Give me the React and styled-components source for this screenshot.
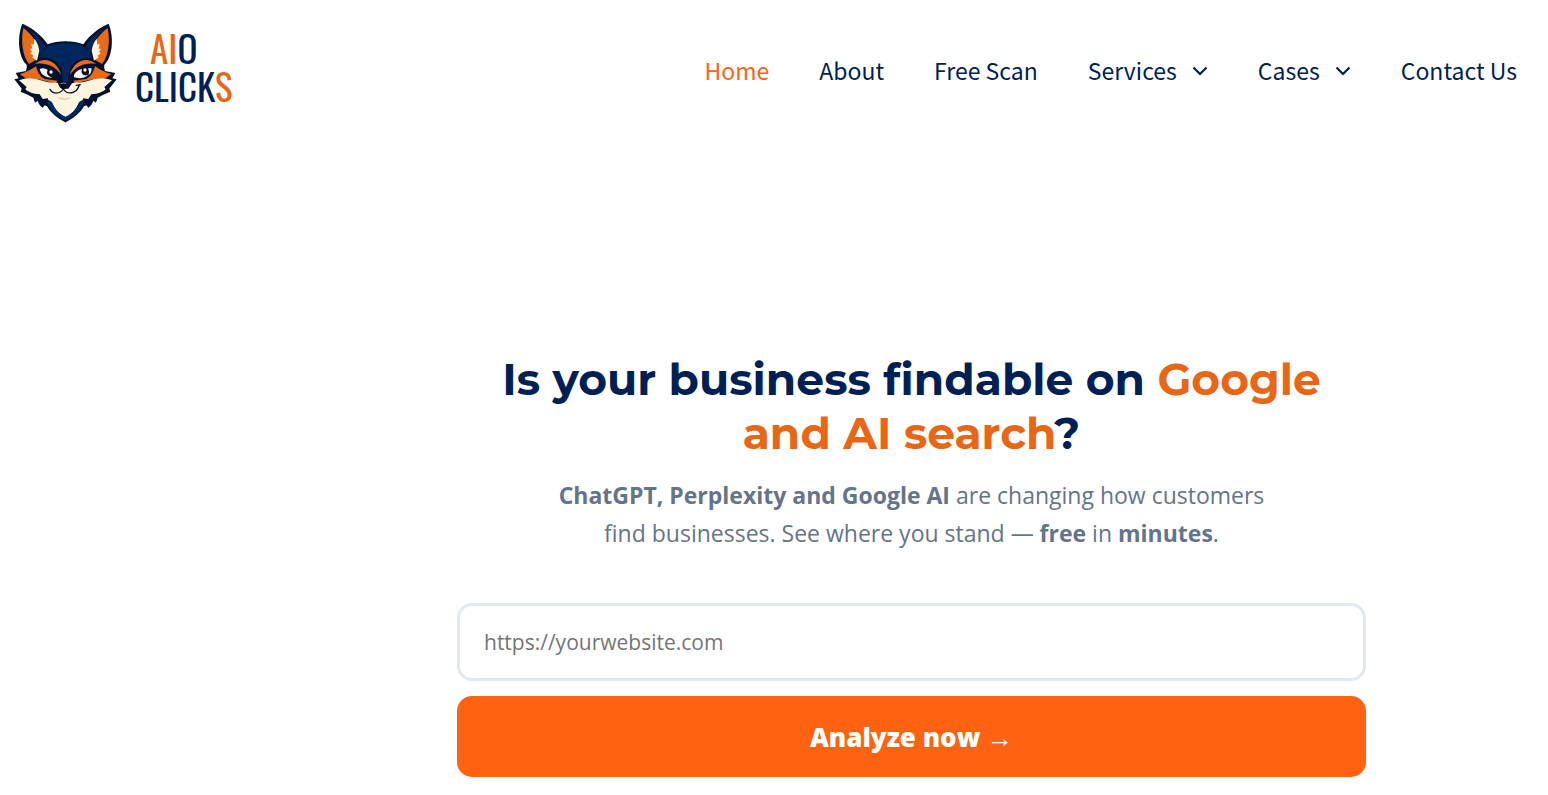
import React from 'react';
import styled, { createGlobalStyle } from 'styled-components';

const navy = '#001f54';
const orange = '#ff6210';
const rust = '#e86717';

const GlobalStyle = createGlobalStyle`
  *,
  *::before,
  *::after {
    box-sizing: border-box;
  }
  body {
    margin: 0;
    background: #fff;
    color: ${navy};
    font-family: 'Segoe UI', 'Open Sans', 'Noto Sans', sans-serif;
  }
`;

const Header = styled.header`
  display: flex;
  align-items: center;
  justify-content: space-between;
  padding: 23px 31px 22px 14px;
`;

const Brand = styled.a`
  display: flex;
  align-items: center;
  gap: 18px;
  text-decoration: none;
`;

const FoxSvg = styled.svg`
  display: block;
  width: 103px;
  height: 100px;
`;

const BrandName = styled.span`
  padding-bottom: 12px;
  color: ${navy};
  font-family: Oswald, 'Roboto Condensed', 'DejaVu Sans Condensed', sans-serif;
  font-size: 37px;
  line-height: 38px;
  text-align: center;
`;

const BrandLine = styled.span`
  display: block;
  padding-right: ${({ $inset }) => ($inset ? 20 : 0)}px;
`;

const Accent = styled.span`
  color: ${rust};
`;

const Nav = styled.nav`
  display: flex;
  gap: 50px;
  padding-bottom: 6px;
`;

const NavLink = styled.a`
  display: flex;
  align-items: center;
  gap: 15px;
  color: ${({ $active }) => ($active ? orange : navy)};
  font-family: 'Noto Sans CJK SC', sans-serif;
  font-size: 23px;
  line-height: 34px;
  text-decoration: none;
  white-space: nowrap;
`;

const ChevronSvg = styled.svg`
  width: 16px;
  height: 12px;
`;

const Hero = styled.main`
  padding: 207px 182px 18px 457px;
  text-align: center;
`;

const Title = styled.h1`
  max-width: 860px;
  margin: 0 auto;
  font-family: Montserrat, Inter, sans-serif;
  font-size: 44px;
  font-weight: 700;
  line-height: 54px;
`;

const Lead = styled.p`
  max-width: 720px;
  margin: 16px auto 51px;
  color: #64748b;
  font-size: 23px;
  line-height: 38px;
`;

const Form = styled.form`
  display: flex;
  flex-direction: column;
  gap: 15px;
`;

const UrlInput = styled.input`
  width: 100%;
  height: 78px;
  padding: 0 24px;
  border: 3px solid #e1e8f0;
  border-radius: 15px;
  background: #fff;
  font-family: inherit;
  font-size: 21px;
  &::placeholder {
    color: #757575;
    opacity: 1;
  }
`;

const Submit = styled.button`
  height: 81px;
  border: 0;
  border-radius: 15px;
  background: ${orange};
  color: #fff;
  font-family: inherit;
  font-size: 26px;
  font-weight: 800;
  cursor: pointer;
`;

const links = [
  { label: 'Home', active: true },
  { label: 'About' },
  { label: 'Free Scan' },
  { label: 'Services', menu: true },
  { label: 'Cases', menu: true },
  { label: 'Contact Us' },
];

const Chevron = () => (
  <ChevronSvg viewBox="0 0 16 12" fill="none" aria-hidden="true">
    <path d="M1.500 3.500 8 10l6.500-6.500" stroke="currentColor" strokeWidth="2.200" />
  </ChevronSvg>
);

// One side of the head; the other side is the same shapes mirrored.
const FoxSide = () => (
  <g>
    <path
      d="M67 42C88 49 126 76 143 104C158 98 176 95 198 95V338H196C170 325 150 306 141 290L134 287 128 294C121 290 116 282 113 273L105 279 100 264 83 255 62 246 65 237 43 209 56 206 47 190 78 184C80 176 82 171 79 164C56 142 50 85 67 42Z"
      fill="#00122f"
    />
    <path d="M78 54C98 65 121 85 136 109L122 136C118 105 106 78 78 54Z" fill="#08265a" />
    <path d="M70 55C92 72 106 88 114 115L108 151 87 163C67 139 62 91 70 55Z" fill="#e86a1b" />
    <path d="M103 87C110 95 116 107 118 123L111 153 97 143 101 138 90 131 96 127 90 117 97 117 94 102 101 105Z" fill="#fff3df" />
    <path d="M198 101C174 101 152 104 141 112C131 120 124 132 116 145C145 138 174 154 185 179L190 222H198Z" fill="#002660" />
    <path d="M105 163C131 139 171 151 184 196C163 168 136 158 105 163Z" fill="#ea6b1b" />
    <path d="M59 193C80 189 94 178 108 170C113 187 119 201 135 208L173 213 168 220C134 215 111 204 79 207Z" fill="#e86a1b" />
    <path d="M57 212C79 202 104 204 130 214C153 222 169 215 178 222L188 237H198V323C179 314 163 299 158 281L145 284 144 266 128 268 119 254C98 252 87 249 76 239L80 232Z" fill="#fff5df" />
    <path d="M140 268L155 276C163 298 178 314 198 322V333C170 320 147 302 140 268Z" fill="#002a66" />
    <path d="M113 171C134 163 155 174 176 207C148 211 121 200 113 171Z" fill="#00122f" />
  </g>
);

const Fox = () => (
  <FoxSvg viewBox="42 40 309 300" role="img" aria-label="Fox">
    <FoxSide />
    <g transform="matrix(-1 0 0 1 393 0)">
      <FoxSide />
    </g>
    <path d="M119 178C128 174 138 177 143 181C137 193 146 201 158 204C137 204 123 196 119 178Z" fill="#f4f6fa" />
    <path d="M222 203C220 190 233 181 246 178C241 191 250 201 265 196C252 207 236 207 222 203Z" fill="#f4f6fa" />
    <path d="M264 177C269 174 273 175 275 177C275 187 271 193 265 196C268 190 268 183 264 177Z" fill="#f4f6fa" />
    <circle cx="153" cy="187" r="5" fill="#fff" />
    <circle cx="255" cy="181" r="5" fill="#fff" />
    <path d="M174 221C183 216 200 216 207 222C204 232 195 239 190 239C183 239 177 232 174 221Z" fill="#001029" />
    <path d="M181 222Q190 218 199 222" fill="none" stroke="#7385a6" strokeWidth="3" />
    <path
      d="M150 239C158 253 179 255 190 238C202 257 229 252 237 229M229 227L241 225"
      fill="none"
      stroke="#001029"
      strokeWidth="4"
      strokeLinecap="round"
    />
    <path d="M171 263Q191 277 213 264Q193 269 171 263Z" fill="#d9c7ad" stroke="#d9c7ad" />
  </FoxSvg>
);

const App = () => (
  <>
    <GlobalStyle />
    <Header>
      <Brand href="#home">
        <Fox />
        <BrandName>
          <BrandLine $inset>
            <Accent>AI</Accent>O
          </BrandLine>
          <BrandLine>
            CLICK<Accent>S</Accent>
          </BrandLine>
        </BrandName>
      </Brand>
      <Nav>
        {links.map(({ label, active, menu }) => (
          <NavLink key={label} href="#" $active={active}>
            {label}
            {menu && <Chevron />}
          </NavLink>
        ))}
      </Nav>
    </Header>
    <Hero>
      <Title>
        Is your business findable on <Accent>Google and AI search</Accent>?
      </Title>
      <Lead>
        <strong>ChatGPT, Perplexity and Google AI</strong> are changing how customers find
        businesses. See where you stand — <strong>free</strong> in <strong>minutes</strong>.
      </Lead>
      <Form onSubmit={e => e.preventDefault()}>
        <UrlInput type="url" placeholder="https://yourwebsite.com" aria-label="Website address" />
        <Submit type="submit">Analyze now →</Submit>
      </Form>
    </Hero>
  </>
);

export default App;
